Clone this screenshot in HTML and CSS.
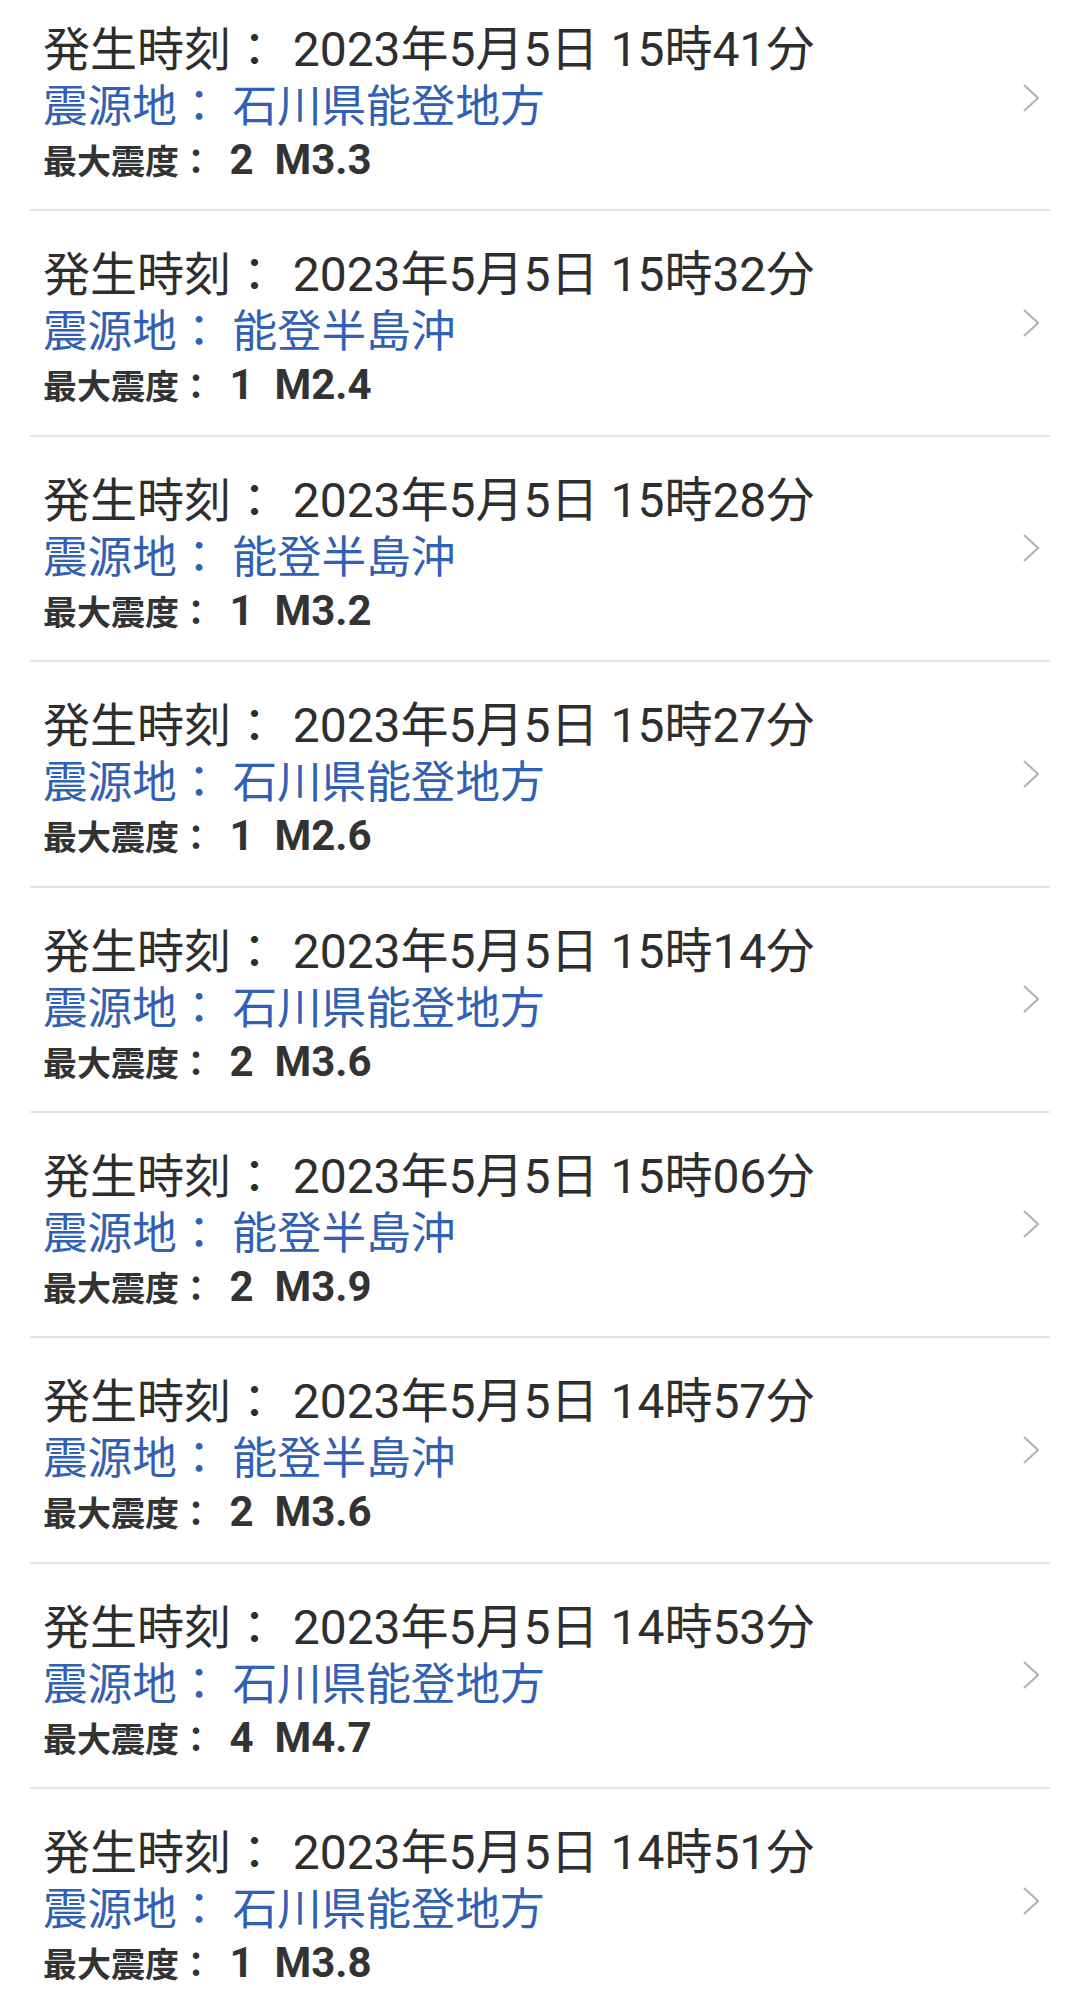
FILE: index.html
```html
<!DOCTYPE html>
<html lang="ja">
<head>
  <meta charset="UTF-8" />
  <meta name="viewport" content="width=device-width, initial-scale=1.0"/>
  <title>地震情報</title>
  <link rel="stylesheet" href="styles.css">
</head>
<body>
  <ul class="quakes">
    <li class="quake">
      <div class="info">
        <p class="time">発生時刻： <span class="val">2023年5月5日 15時41分</span></p>
        <p class="place">震源地： 石川県能登地方</p>
        <p class="scale">最大震度： <span class="val">2&nbsp; M3.3</span></p>
      </div>
      <svg class="chevron" viewBox="0 0 20 30"><polyline points="3,2 17,15 3,28" /></svg>
    </li>
    <li class="quake">
      <div class="info">
        <p class="time">発生時刻： <span class="val">2023年5月5日 15時32分</span></p>
        <p class="place">震源地： 能登半島沖</p>
        <p class="scale">最大震度： <span class="val">1&nbsp; M2.4</span></p>
      </div>
      <svg class="chevron" viewBox="0 0 20 30"><polyline points="3,2 17,15 3,28" /></svg>
    </li>
    <li class="quake">
      <div class="info">
        <p class="time">発生時刻： <span class="val">2023年5月5日 15時28分</span></p>
        <p class="place">震源地： 能登半島沖</p>
        <p class="scale">最大震度： <span class="val">1&nbsp; M3.2</span></p>
      </div>
      <svg class="chevron" viewBox="0 0 20 30"><polyline points="3,2 17,15 3,28" /></svg>
    </li>
    <li class="quake">
      <div class="info">
        <p class="time">発生時刻： <span class="val">2023年5月5日 15時27分</span></p>
        <p class="place">震源地： 石川県能登地方</p>
        <p class="scale">最大震度： <span class="val">1&nbsp; M2.6</span></p>
      </div>
      <svg class="chevron" viewBox="0 0 20 30"><polyline points="3,2 17,15 3,28" /></svg>
    </li>
    <li class="quake">
      <div class="info">
        <p class="time">発生時刻： <span class="val">2023年5月5日 15時14分</span></p>
        <p class="place">震源地： 石川県能登地方</p>
        <p class="scale">最大震度： <span class="val">2&nbsp; M3.6</span></p>
      </div>
      <svg class="chevron" viewBox="0 0 20 30"><polyline points="3,2 17,15 3,28" /></svg>
    </li>
    <li class="quake">
      <div class="info">
        <p class="time">発生時刻： <span class="val">2023年5月5日 15時06分</span></p>
        <p class="place">震源地： 能登半島沖</p>
        <p class="scale">最大震度： <span class="val">2&nbsp; M3.9</span></p>
      </div>
      <svg class="chevron" viewBox="0 0 20 30"><polyline points="3,2 17,15 3,28" /></svg>
    </li>
    <li class="quake">
      <div class="info">
        <p class="time">発生時刻： <span class="val">2023年5月5日 14時57分</span></p>
        <p class="place">震源地： 能登半島沖</p>
        <p class="scale">最大震度： <span class="val">2&nbsp; M3.6</span></p>
      </div>
      <svg class="chevron" viewBox="0 0 20 30"><polyline points="3,2 17,15 3,28" /></svg>
    </li>
    <li class="quake">
      <div class="info">
        <p class="time">発生時刻： <span class="val">2023年5月5日 14時53分</span></p>
        <p class="place">震源地： 石川県能登地方</p>
        <p class="scale">最大震度： <span class="val">4&nbsp; M4.7</span></p>
      </div>
      <svg class="chevron" viewBox="0 0 20 30"><polyline points="3,2 17,15 3,28" /></svg>
    </li>
    <li class="quake">
      <div class="info">
        <p class="time">発生時刻： <span class="val">2023年5月5日 14時51分</span></p>
        <p class="place">震源地： 石川県能登地方</p>
        <p class="scale">最大震度： <span class="val">1&nbsp; M3.8</span></p>
      </div>
      <svg class="chevron" viewBox="0 0 20 30"><polyline points="3,2 17,15 3,28" /></svg>
    </li>
  </ul>
</body>
</html>
```

FILE: styles.css
```css
body {
  margin: 0;
  background: #fff;
  font-family: Roboto, "Noto Sans CJK JP", sans-serif;
  color: #333;
  overflow: hidden;
}

.quakes {
  list-style: none;
  margin: -14px 30px 0 30px;
  padding: 0;
}

.quake {
  display: flex;
  align-items: center;
  padding: 35px 9px 20.4px 13px;
  border-bottom: 2px solid #e4e4e4;
}

.info {
  flex: 1;
}

.info p {
  margin: 0;
  white-space: nowrap;
}

.val {
  line-height: 1;
}

.time {
  font-size: 47px;
  line-height: 58px;
  color: #2e2e2e;
}

.time .val {
  font-size: 48px;
  margin-left: 3px;
}

.place {
  font-size: 44.6px;
  line-height: 56px;
  color: #3160b4;
}

.scale {
  font-size: 34px;
  line-height: 54px;
  font-weight: bold;
  color: #333;
}

.scale .val {
  font-size: 42px;
  margin-left: 8px;
}

.chevron {
  width: 20px;
  height: 30px;
  margin-top: -15px;
}

.chevron polyline {
  fill: none;
  stroke: #b4b4b4;
  stroke-width: 2.2;
}
```
